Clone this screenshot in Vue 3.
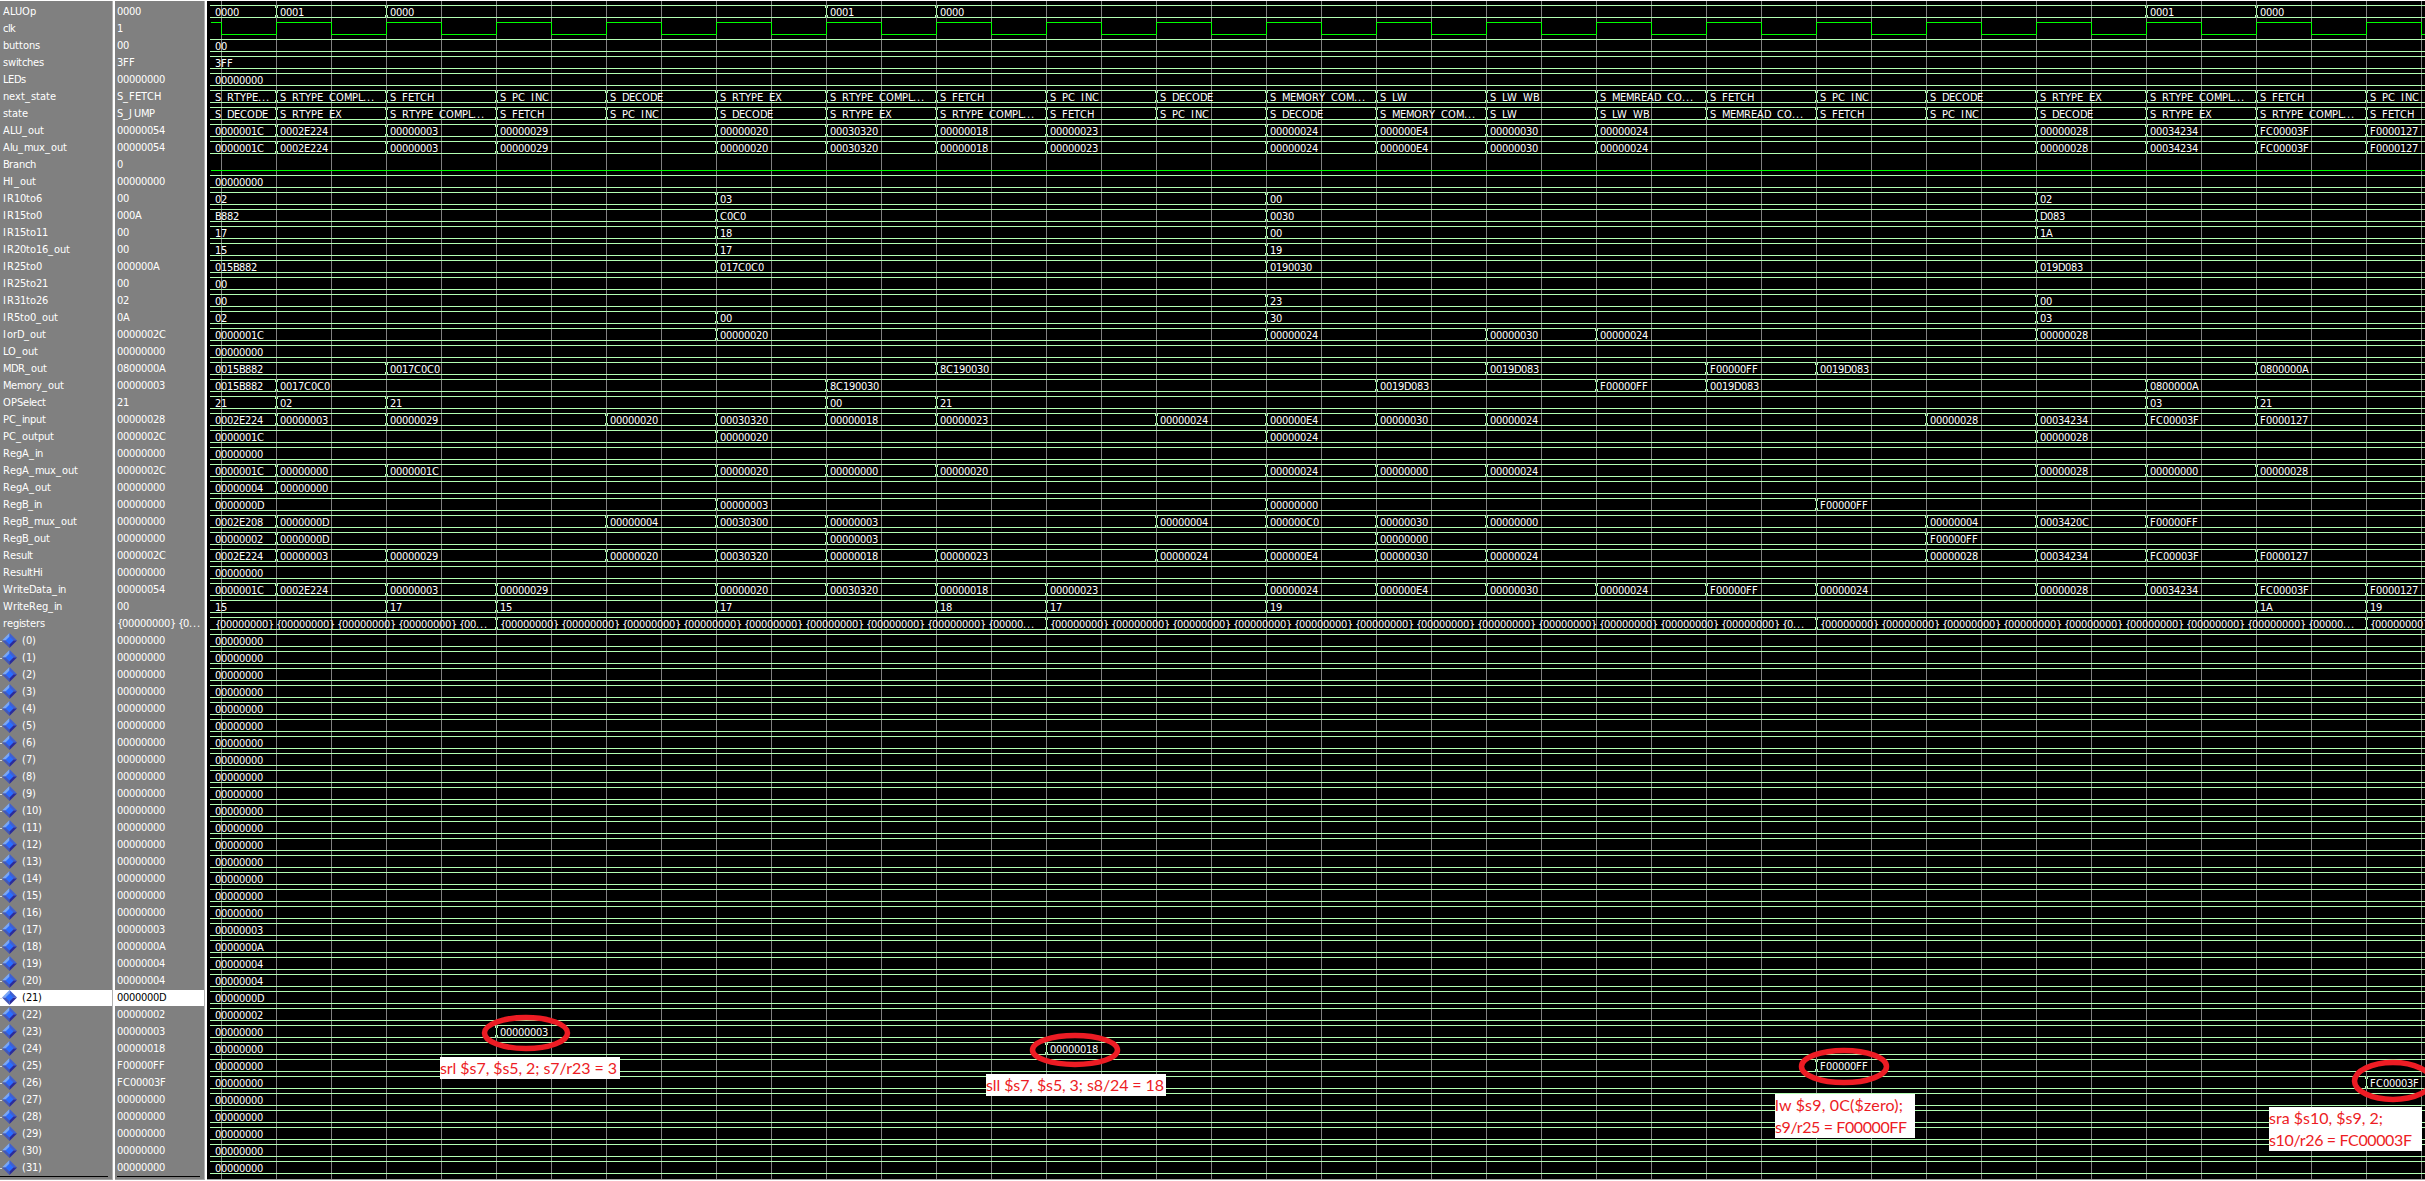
<script setup>
// Pixel advances of the 11px interface face, so every label sits on whole pixels.
const groups = {
  2: 'il',
  3: ' ',
  4: 'I.rtf()',
  5: 'LJcsk{}',
  7: 'ACDGHNRU',
  8: 'OM',
  9: 'm',
  10: 'W',
}
const advance = {}
for (const [w, chars] of Object.entries(groups)) for (const c of chars) advance[c] = +w
advance.w = 8

function xs(text, start) {
  let x = start
  return [...text].map((c) => {
    const at = x
    x += advance[c] ?? 6
    return at
  }).join(' ')
}

const LEFT = 207
const END = 2425 - LEFT
const edge = (k) => 276 + 110 * k - LEFT

const alu = '1C|0:2E224|1:3|2:29|4:20|5:30320|6:18|7:23|9:24|10:E4|11:30|12:24'
const tail = '|16:28|17:34234|18:FC00003F|19:F0000127'
const pc = '2E224|0:3|1:29|3:20|4:30320|5:18|6:23|8:24|9:E4|10:30|11:24|15:28|16:34234|17:FC00003F|18:F0000127'
const word = (n, rest) => '{00000000} '.repeat(n) + rest

const signals = [
  ['ALUOp', '0000', '0|0:1|1:0|5:1|6:0|17:1|18:0'],
  ['clk', '1', 'clock'],
  ['buttons', '00', '0'],
  ['switches', '3FF', '3FF'],
  ['LEDs', '00000000', '0'],
  ['next_state', 'S_FETCH', 'S_RTYPE...|0:S_RTYPE_COMPL...|1:S_FETCH|2:S_PC_INC|3:S_DECODE|4:S_RTYPE_EX|5:S_RTYPE_COMPL...|6:S_FETCH|7:S_PC_INC|8:S_DECODE|9:S_MEMORY_COM...|10:S_LW|11:S_LW_WB|12:S_MEMREAD_CO...|13:S_FETCH|14:S_PC_INC|15:S_DECODE|16:S_RTYPE_EX|17:S_RTYPE_COMPL...|18:S_FETCH|19:S_PC_INC'],
  ['state', 'S_JUMP', 'S_DECODE|0:S_RTYPE_EX|1:S_RTYPE_COMPL...|2:S_FETCH|3:S_PC_INC|4:S_DECODE|5:S_RTYPE_EX|6:S_RTYPE_COMPL...|7:S_FETCH|8:S_PC_INC|9:S_DECODE|10:S_MEMORY_COM...|11:S_LW|12:S_LW_WB|13:S_MEMREAD_CO...|14:S_FETCH|15:S_PC_INC|16:S_DECODE|17:S_RTYPE_EX|18:S_RTYPE_COMPL...|19:S_FETCH'],
  ['ALU_out', '00000054', alu + tail],
  ['Alu_mux_out', '00000054', alu + tail],
  ['Branch', '0', 'low'],
  ['HI_out', '00000000', '0'],
  ['IR10to6', '00', '02|4:03|9:00|16:02'],
  ['IR15to0', '000A', 'B882|4:C0C0|9:0030|16:D083'],
  ['IR15to11', '00', '17|4:18|9:00|16:1A'],
  ['IR20to16_out', '00', '15|4:17|9:19'],
  ['IR25to0', '000000A', '15B882|4:17C0C0|9:190030|16:19D083'],
  ['IR25to21', '00', '0'],
  ['IR31to26', '02', '00|9:23|16:00'],
  ['IR5to0_out', '0A', '02|4:00|9:30|16:03'],
  ['IorD_out', '0000002C', '1C|4:20|9:24|11:30|12:24|16:28'],
  ['LO_out', '00000000', '0'],
  ['MDR_out', '0800000A', '15B882|1:17C0C0|6:8C190030|11:19D083|13:F00000FF|14:19D083|18:800000A'],
  ['Memory_out', '00000003', '15B882|0:17C0C0|5:8C190030|10:19D083|12:F00000FF|13:19D083|17:800000A'],
  ['OPSelect', '21', '21|0:02|1:21|5:00|6:21|17:03|18:21'],
  ['PC_input', '00000028', pc],
  ['PC_output', '0000002C', '1C|4:20|9:24|16:28'],
  ['RegA_in', '00000000', '0'],
  ['RegA_mux_out', '0000002C', '1C|0:0|1:1C|4:20|5:0|6:20|9:24|10:0|11:24|16:28|17:0|18:28'],
  ['RegA_out', '00000000', '4|0:0'],
  ['RegB_in', '00000000', 'D|4:3|9:0|14:F00000FF'],
  ['RegB_mux_out', '00000000', '2E208|0:D|3:4|4:30300|5:3|8:4|9:C0|10:30|11:0|15:4|16:3420C|17:F00000FF'],
  ['RegB_out', '00000000', '2|0:D|5:3|10:0|15:F00000FF'],
  ['Result', '0000002C', pc],
  ['ResultHi', '00000000', '0'],
  ['WriteData_in', '00000054', alu + '|13:F00000FF|14:24' + tail],
  ['WriteReg_in', '00', '15|1:17|2:15|4:17|6:18|7:17|9:19|18:1A|19:19'],
  ['registers', '{00000000} {0...', word(4, '{00...') + '|2:' + word(8, '{00000...') + '|7:' + word(12, '{0...') + '|14:' + word(8, '{00000...') + '|19:{00000000}'],
]

const regValue = { 17: '3', 18: 'A', 19: '4', 20: '4', 21: 'D', 22: '2', 23: '3', 24: '18', 25: 'F00000FF', 26: 'FC00003F' }
const regChange = { 23: '0|2:3', 24: '0|7:18', 25: '0|14:F00000FF', 26: '0|19:FC00003F' }
for (let i = 0; i < 32; i++) {
  const v = regValue[i] ?? '0'
  signals.push([`(${i})`, v.padStart(8, '0'), regChange[i] ?? v, true])
}

const rows = signals.map(([name, value, wave, reg]) => {
  const row = { name, value, reg: !!reg, selected: name === '(21)', kind: 'bus', items: [] }
  if (wave === 'clock' || wave === 'low') row.kind = wave
  else
    row.items = wave.split('|').map((part, i) => {
      const [k, v] = i ? part.split(':') : [null, part]
      const text = /^[S{]/.test(v) ? v : v.padStart(value.length, '0')
      return { text, edge: k === null ? null : edge(+k), x: k === null ? 215 - LEFT : edge(+k) + 4 }
    })
  return row
})

let clockPath = 'M4 1.5H14.5V13.5'
for (let k = 0; k < 20; k++) {
  const x = edge(k) + 0.5
  clockPath += `H${x}V1.5H${x + 55}V13.5`
}
clockPath += `H${END}`

const circles = [
  { x: 482, y: 1015, w: 88, h: 36 },
  { x: 1030, y: 1033, w: 90, h: 34 },
  { x: 1799, y: 1048, w: 90, h: 37 },
  { x: 2352, y: 1060, w: 82, h: 42 },
]
const notes = [
  { x: 440, y: 1057, w: 180, lines: [['srl $s7, $s5, 2; s7/r23 = 3', 177]] },
  { x: 986, y: 1074, w: 180, lines: [['sll $s7, $s5, 3; s8/24 = 18', 178]] },
  { x: 1775, y: 1094, w: 140, lines: [['lw $s9, 0C($zero);', 128], ['s9/r25 = F00000FF', 132]] },
  { x: 2269, y: 1107, w: 153, lines: [['sra $s10, $s9, 2;', 114], ['s10/r26 = FC00003F', 143]] },
]
</script>

<template>
  <main class="viewer">
    <section class="pane names">
      <svg v-for="r in rows" :key="r.name" class="row" :class="{ selected: r.selected }" width="112" height="17">
        <rect v-if="r.selected" width="112" height="16" fill="#fff" />
        <g v-if="r.reg">
          <path d="M0 8.5H2" stroke="#d8d8d8" />
          <path d="M9.5 0V7.5H2z" fill="#7aa7f5" />
          <path d="M9.5 0V7.5H17z" fill="#3f5fd0" />
          <path d="M2 7.5H9.5V15z" fill="#4257b8" />
          <path d="M17 7.5H9.5V15z" fill="#2b2b9b" />
          <path d="M9.5 3.5L13.5 7.5L9.5 11.5L5.5 7.5z" fill="#2a6cff" />
        </g>
        <text :x="xs(r.name, r.reg ? 22 : 3)" y="11">{{ r.name }}</text>
      </svg>
      <div class="rule"></div>
    </section>
    <div class="split"></div>
    <section class="pane values">
      <svg v-for="r in rows" :key="r.name" class="row" :class="{ selected: r.selected }" width="89" height="17">
        <rect v-if="r.selected" width="89" height="16" fill="#fff" />
        <text :x="xs(r.value, 2)" y="11">{{ r.value }}</text>
      </svg>
      <div class="rule"></div>
    </section>
    <div class="split"></div>
    <section class="pane waves">
      <svg class="defs" width="0" height="0">
        <clipPath id="lane"><rect x="0" y="0" :width="END" height="13.5" /></clipPath>
      </svg>
      <svg v-for="r in rows" :key="r.name" class="row" :width="END" height="17">
        <path v-if="r.kind === 'clock'" :d="clockPath" class="logic" />
        <path v-else-if="r.kind === 'low'" :d="`M4 13.5H${END}`" class="logic" />
        <template v-else>
          <g clip-path="url(#lane)">
            <text v-for="(t, i) in r.items" :key="i" :x="xs(t.text, t.x)" y="12">{{ t.text }}</text>
          </g>
          <path :d="`M3 1.5H${END}M3 13.5H${END}`" class="bus" />
          <template v-for="(t, i) in r.items" :key="'e' + i">
            <path
              v-if="t.edge !== null"
              :d="`M${t.edge - 0.5} 2V4M${t.edge + 1.5} 2V4M${t.edge + 0.5} 4V11M${t.edge - 0.5} 11V13M${t.edge + 1.5} 11V13`"
              class="bus"
            />
            <path v-if="t.edge !== null" :d="`M${t.edge + 0.5} 1V4M${t.edge + 0.5} 11V14`" class="grid" />
          </template>
        </template>
      </svg>
    </section>
    <svg class="marks" width="2425" height="1181">
      <ellipse
        v-for="c in circles"
        :key="c.x"
        :cx="c.x + c.w / 2"
        :cy="c.y + c.h / 2"
        :rx="c.w / 2 - 2.5"
        :ry="c.h / 2 - 2.5"
      />
      <g v-for="n in notes" :key="n.x">
        <rect :x="n.x" :y="n.y" :width="n.w" :height="n.lines.length * 22" />
        <text
          v-for="(l, i) in n.lines"
          :key="i"
          :x="n.x"
          :y="n.y + 17 + i * 22"
          :textLength="l[1]"
        >{{ l[0] }}</text>
      </g>
    </svg>
  </main>
</template>

<style>
body {
  margin: 0;
  overflow: hidden;
}
</style>

<style scoped>
.viewer {
  position: relative;
  display: flex;
  box-sizing: border-box;
  width: 2425px;
  height: 1181px;
  padding: 1px 0;
  overflow: hidden;
  background: #fff;
}
.pane {
  flex: none;
  box-sizing: border-box;
  height: 1179px;
  padding-top: 3px;
  overflow: hidden;
  background: #808080;
  border-bottom: 1px solid #a0a0a0;
}
.names {
  width: 112px;
}
.values {
  width: 89px;
}
.split {
  flex: none;
  box-sizing: border-box;
  width: 3px;
  border-left: 1px solid #b0b0b0;
  background: #fff;
}
.waves {
  width: 2218px;
  background: #000 repeating-linear-gradient(90deg, #808080 0 1px, transparent 1px 55px) 14px 0 / 2310px 100% no-repeat;
}
.defs {
  position: absolute;
}
.row {
  display: block;
  height: 17px;
}
.row text {
  font-family: "DejaVu Sans Condensed", "DejaVu Sans", sans-serif;
  font-stretch: condensed;
  font-size: 11px;
  fill: #fff;
  white-space: pre;
}
.row.selected text {
  fill: #000;
}
.rule {
  width: 108px;
  height: 1px;
  margin-top: -1px;
  background: #000;
}
.values .rule {
  width: 83px;
  margin-left: 2px;
}
.bus,
.logic,
.grid {
  fill: none;
  stroke: #b3ffb3;
  stroke-width: 1;
  shape-rendering: crispEdges;
}
.logic {
  stroke: #00ff00;
}
.grid {
  stroke: #808080;
}
.marks {
  position: absolute;
  top: 0;
  left: 0;
}
.marks ellipse {
  fill: none;
  stroke: #ed1c24;
  stroke-width: 5.5;
}
.marks rect {
  fill: #fff;
}
.marks text {
  font-family: Lato, "Open Sans", sans-serif;
  font-size: 16px;
  fill: #ed1c24;
  white-space: pre;
}
</style>
